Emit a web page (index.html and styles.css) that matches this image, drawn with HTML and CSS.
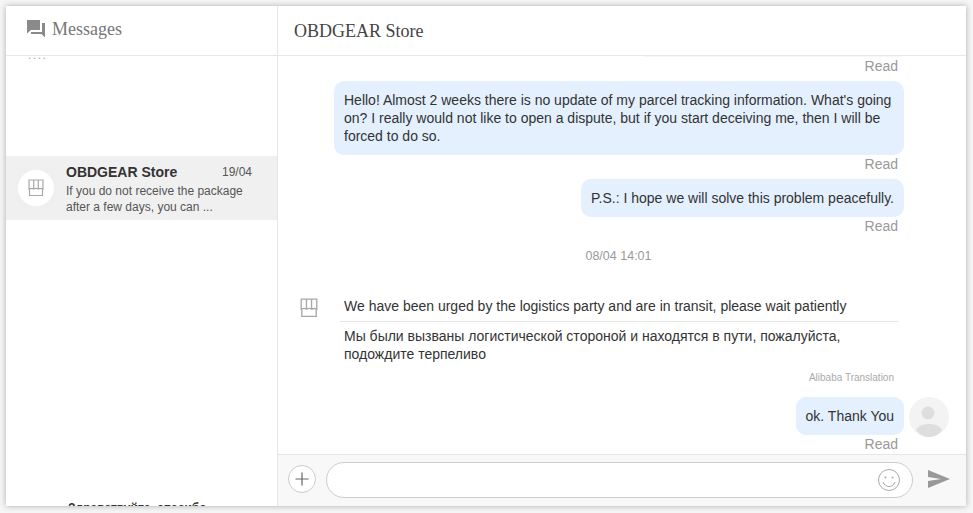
FILE: index.html
```html
<!DOCTYPE html>
<html lang="en">
  <head>
    <meta charset="utf-8">
    <title>Messages</title>
    <link rel="stylesheet" href="styles.css">
  </head>
  <body>
    <div class="chat">
      <div class="sidebar">
        <div class="sidebarHead">
          <svg class="headIcon" width="20" height="20" viewBox="0 0 20 20"><path fill="#8a8a8a" d="M1 1h13v10H5l-4 3.500z"/><path fill="#8a8a8a" d="M16 4h3v14.500L15.500 15H5v-2h11z"/></svg>
          <span class="headTitle">Messages</span>
        </div>
        <div class="list">
          <div class="clipped clippedTop">....</div>
          <div class="item">
            <div class="itemAvatar">
              <svg width="18" height="18" viewBox="0 0 18 18"><use href="#store"/></svg>
            </div>
            <div class="itemBody">
              <div class="itemTop"><span class="itemName">OBDGEAR Store</span><span class="itemDate">19/04</span></div>
              <p class="itemText">If you do not receive the package after a few days, you can ...</p>
            </div>
          </div>
          <div class="clipped clippedBottom"><span class="clippedDots">....</span><span class="clippedName">Здравствуйте, спасибо</span></div>
        </div>
      </div>
      <div class="main">
        <div class="mainHead">OBDGEAR Store</div>
        <div class="messages">
          <div class="sliver"></div>
          <div class="read">Read</div>
          <div class="row"><div class="bubble bubbleWide">Hello! Almost 2 weeks there is no update of my parcel tracking information. What's going on? I really would not like to open a dispute, but if you start deceiving me, then I will be forced to do so.</div></div>
          <div class="read">Read</div>
          <div class="row"><div class="bubble">P.S.: I hope we will solve this problem peacefully.</div></div>
          <div class="read">Read</div>
          <div class="time">08/04 14:01</div>
          <div class="incoming">
            <svg class="incomingIcon" width="20" height="20" viewBox="0 0 18 18"><use href="#store"/></svg>
            <div class="incomingBody">
              <p class="original">We have been urged by the logistics party and are in transit, please wait patiently</p>
              <p class="translated">Мы были вызваны логистической стороной и находятся в пути, пожалуйста, подождите терпеливо</p>
              <div class="credit">Alibaba Translation</div>
            </div>
          </div>
          <div class="row rowAvatar">
            <div class="bubble">ok. Thank You</div>
            <svg class="userAvatar" width="40" height="40" viewBox="0 0 40 40"><circle cx="20" cy="20" r="20" fill="#f3f3f3"/><circle cx="19" cy="16" r="6.500" fill="#dedede"/><path fill="#dedede" d="M7 33c2-4 7-6 13-6s11 2 13 6c-3 4.500-8 7-13 7s-10-2.500-13-7z"/></svg>
          </div>
          <div class="read readLast">Read</div>
        </div>
        <div class="composer">
          <svg class="plusIcon" width="28" height="28" viewBox="0 0 28 28"><circle cx="14" cy="14" r="13.500" fill="#fff" stroke="#ccc"/><path d="M14 7.500v13M7.500 14h13" stroke="#666" stroke-width="1.200"/></svg>
          <div class="inputBox">
            <svg width="24" height="24" viewBox="0 0 24 24" fill="none" stroke="#aaa"><circle cx="12" cy="12" r="10.500"/><circle cx="8.500" cy="9.500" r="1" fill="#aaa" stroke="none"/><circle cx="15.500" cy="9.500" r="1" fill="#aaa" stroke="none"/><path d="M6 14c1 3 3.500 4.500 6 4.500s5-1.500 6-4.500"/></svg>
          </div>
          <svg class="sendIcon" width="22" height="18" viewBox="0 0 22 18"><path fill="#999" d="M0 0l22 9L0 18v-7l13-2L0 7z"/></svg>
        </div>
      </div>
    </div>
    <svg class="defs" width="0" height="0">
      <symbol id="store" viewBox="0 0 18 18">
        <path fill="none" stroke="#a8a8a8" stroke-width="1.200" d="M2 1h14v9c-1.500-.8-3-.8-4.700 0-1.500-.8-3-.8-4.600 0-1.500-.8-3.200-.8-4.700 0zM6.700 1v9M11.300 1v9M2.500 10v6.500h13V10"/>
      </symbol>
    </svg>
  </body>
</html>
```

FILE: styles.css
```css
html, body {
  height: 100%;
}

body {
  margin: 0;
  background: #f6f6f6;
  font-family: "Liberation Sans", Arial, sans-serif;
  color: #333;
  overflow: hidden;
}

p {
  margin: 0;
}

.defs {
  position: absolute;
}

.chat {
  display: flex;
  width: 960px;
  height: 500px;
  margin: 6px 0 0 6px;
  background: #fff;
  box-shadow: 0 0 6px rgba(0, 0, 0, 0.3);
}

.sidebar {
  display: flex;
  flex-direction: column;
  width: 271px;
  border-right: 1px solid #e6e6e6;
}

.sidebarHead {
  display: flex;
  align-items: center;
  gap: 6px;
  flex: none;
  height: 50px;
  box-sizing: border-box;
  padding: 0 0 3px 20px;
  border-bottom: 1px solid #e6e6e6;
}

.headTitle {
  font-family: "Liberation Serif", serif;
  font-size: 18px;
  color: #777;
}

.list {
  display: flex;
  flex-direction: column;
  flex: 1;
  min-height: 0;
  overflow: hidden;
}

.clipped {
  flex: none;
  font-size: 12px;
  line-height: 10px;
}

.clippedTop {
  height: 106px;
  margin-top: -6px;
  padding-left: 22px;
  letter-spacing: 1.500px;
  color: #aaa;
}

.clippedBottom {
  display: flex;
  margin-top: 283px;
  padding-left: 22px;
}

.clippedDots {
  width: 40px;
  letter-spacing: 1.500px;
  color: #aaa;
}

.clippedName {
  font-weight: bold;
  color: #333;
}

.item {
  display: flex;
  flex: none;
  height: 64px;
  padding-left: 12px;
  background: #f0f0f0;
}

.itemAvatar {
  display: flex;
  align-items: center;
  justify-content: center;
  flex: none;
  width: 36px;
  height: 36px;
  margin-top: 14px;
  background: #fff;
  border-radius: 50%;
}

.itemBody {
  width: 186px;
  margin-left: 12px;
  padding-top: 7px;
}

.itemTop {
  display: flex;
  justify-content: space-between;
  align-items: center;
  height: 17px;
}

.itemName {
  font-size: 14px;
  font-weight: bold;
  color: #333;
}

.itemDate {
  font-size: 12px;
  color: #555;
}

.itemText {
  margin-top: 3px;
  font-size: 12px;
  line-height: 16px;
  color: #555;
}

.main {
  display: flex;
  flex-direction: column;
  flex: 1;
  min-width: 0;
}

.mainHead {
  flex: none;
  height: 50px;
  box-sizing: border-box;
  padding: 14px 0 0 16px;
  border-bottom: 1px solid #e6e6e6;
  font-family: "Liberation Serif", serif;
  font-size: 18px;
  line-height: 22px;
  color: #444;
}

.messages {
  flex: 1;
  min-height: 0;
  overflow: hidden;
  font-size: 14px;
  line-height: 18px;
}

.sliver {
  height: 1px;
  margin: 0 66px 0 365px;
  background: #f3f8ff;
}

.row {
  display: flex;
  justify-content: flex-end;
  align-items: flex-start;
  padding-right: 62px;
}

.rowAvatar {
  gap: 5px;
  padding-right: 17px;
  margin-top: 10px;
}

.bubble {
  padding: 10px;
  background: #e4f0fe;
  border-radius: 10px;
  color: #333;
}

.bubbleWide {
  width: 550px;
}

.read {
  padding-right: 68px;
  margin-bottom: 6px;
  text-align: right;
  color: #999;
}

.readLast {
  margin-top: -2px;
  margin-bottom: 0;
}

.time {
  margin-top: 12px;
  padding-right: 7px;
  text-align: center;
  font-size: 12.500px;
  color: #999;
}

.incoming {
  display: flex;
  margin: 26px 0 0 21px;
}

.incomingIcon {
  flex: none;
  margin-top: 7px;
}

.incomingBody {
  width: 558px;
  margin-left: 21px;
}

.original {
  padding: 6px 4px 6px;
  border-bottom: 1px solid #e6e6e6;
}

.translated {
  padding: 5px 4px 0;
}

.credit {
  margin-top: 6px;
  padding-right: 4px;
  text-align: right;
  font-size: 10px;
  color: #aaa;
}

.composer {
  display: flex;
  align-items: center;
  gap: 10px;
  flex: none;
  height: 52px;
  box-sizing: border-box;
  padding: 0 16px 1px 10px;
  background: #f8f8f8;
  border-top: 1px solid #e6e6e6;
}

.plusIcon {
  margin-top: -2px;
}

.sendIcon {
  margin: -2px 0 0 5px;
}

.inputBox {
  display: flex;
  align-items: center;
  justify-content: flex-end;
  flex: 1;
  height: 34px;
  padding-right: 11px;
  background: #fff;
  border: 1px solid #ccc;
  border-radius: 18px;
}
```
